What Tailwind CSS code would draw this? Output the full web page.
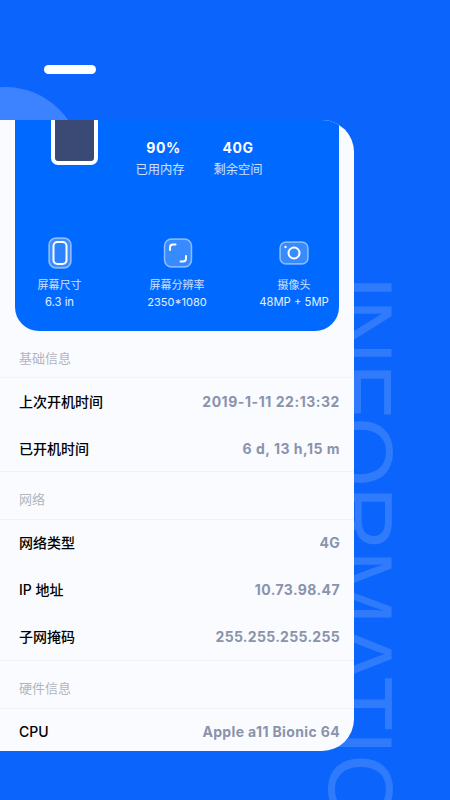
<!DOCTYPE html>
<html>
  <head>
    <meta charset="UTF-8" />
    <title>Information</title>
    <script src="https://cdn.jsdelivr.net/npm/@tailwindcss/browser@4"></script>
  </head>
  <body class="bg-[#0b64fb] font-['Inter','Noto_Sans_CJK_SC',sans-serif]">
    <div class="relative w-[450px] h-[800px] overflow-hidden">
      <!-- backdrop shapes -->
      <div class="absolute left-[-72px] top-[87px] w-[154px] h-[154px] rounded-full bg-[#3d82ff]"></div>
      <div class="absolute left-[394px] top-[275px] origin-top-left rotate-90 whitespace-nowrap font-['Liberation_Sans'] text-[90px] leading-[68px] tracking-[-1px] text-white/15">INFORMATION</div>

      <div class="relative pt-[65px]">
        <div class="ml-[44px] w-[52px] h-[9px] rounded-full bg-white"></div>

        <div class="mt-[46px] w-[354px] h-[631px] bg-[#f9fbff] rounded-tr-[32px] rounded-br-[32px] overflow-hidden">
          <div class="ml-[15px] w-[324px] h-[211px] bg-[#0069ff] rounded-b-[24px] overflow-hidden">
            <div class="flex h-[101px]">
              <div class="ml-[36px] w-[47px] h-[45px] border-x-4 border-b-4 border-white bg-[#3a4a75] rounded-b-[7px]"></div>
              <div class="ml-[37px] pt-[18px] w-[50px] flex flex-col items-center text-white whitespace-nowrap">
                <span class="pl-[7px] text-[14px] leading-[20px] font-bold tracking-[0.5px]">90%</span>
                <span class="text-[12.25px] leading-[18px] mt-[3px] text-white/80">已用内存</span>
              </div>
              <div class="ml-[28px] pt-[18px] w-[50px] flex flex-col items-center text-white whitespace-nowrap">
                <span class="text-[14px] leading-[20px] font-bold tracking-[0.5px]">40G</span>
                <span class="text-[12.25px] leading-[18px] mt-[3px] text-white/80">剩余空间</span>
              </div>
            </div>
            <div class="flex pt-[16px] text-center text-white whitespace-nowrap">
              <div class="w-[89px] flex flex-col items-center">
                <svg class="w-[30px] h-[32px]" viewBox="0 0 30 32" fill="none">
                  <rect x="4" y="1" width="22" height="30" rx="7" fill="#fff" fill-opacity=".25" stroke="#fff" stroke-opacity=".5" stroke-width="1.5"/>
                  <rect x="8.500" y="5" width="13" height="22" rx="4" fill="#0069ff" fill-opacity=".3" stroke="#fff" stroke-width="2"/>
                </svg>
                <span class="mt-[8px] text-[11px] leading-[16px] text-white/80">屏幕尺寸</span>
                <span class="mt-[1px] text-[11.25px] leading-[16px] text-white/90">6.3 in</span>
              </div>
              <div class="ml-[28px] w-[90px] flex flex-col items-center">
                <svg class="ml-[2px] w-[30px] h-[32px]" viewBox="0 0 30 32" fill="none">
                  <rect x="1.500" y="2" width="27" height="28" rx="7" fill="#fff" fill-opacity=".22" stroke="#fff" stroke-opacity=".5" stroke-width="1.5"/>
                  <path d="M7 13V10.500a3 3 0 0 1 3-3H12.500M23 19v2.500a3 3 0 0 1-3 3H17.500" stroke="#fff" stroke-width="2" stroke-linecap="round"/>
                </svg>
                <span class="mt-[8px] text-[11px] leading-[16px] text-white/80">屏幕分辨率</span>
                <span class="mt-[1px] text-[11px] leading-[16px] text-white/90">2350*1080</span>
              </div>
              <div class="ml-[27px] w-[90px] flex flex-col items-center">
                <svg class="w-[30px] h-[32px]" viewBox="0 0 30 32" fill="none">
                  <rect x="1" y="5" width="28" height="22" rx="6" fill="#fff" fill-opacity=".22" stroke="#fff" stroke-opacity=".5" stroke-width="1.5"/>
                  <circle cx="15" cy="16" r="5.500" stroke="#fff" stroke-width="2"/>
                  <circle cx="6.500" cy="10" r="1.200" fill="#fff"/>
                </svg>
                <span class="mt-[8px] text-[11px] leading-[16px] text-white/80">摄像头</span>
                <span class="mt-[1px] text-[11.25px] leading-[16px] text-white/90">48MP + 5MP</span>
              </div>
            </div>
          </div>

          <div class="h-[46px] px-[19px] pt-[19px] text-[13px] leading-[17px] text-[#b3b5bb]">基础信息</div>
          <div class="border-t border-[#f0f2f7]">
            <div class="h-[47px] pl-[19px] pr-[14px] flex items-center justify-between">
              <span class="text-[14px] font-medium text-black">上次开机时间</span>
              <span class="text-[14px] font-bold text-[#8a93ab] tracking-[0.55px]">2019-1-11 22:13:32</span>
            </div>
            <div class="h-[46px] pl-[19px] pr-[14px] flex items-center justify-between">
              <span class="text-[14px] font-medium text-black">已开机时间</span>
              <span class="text-[14px] font-bold text-[#8a93ab] tracking-[0.5px]">6 d, 13 h,15 m</span>
            </div>
          </div>

          <div class="h-[48px] border-t border-[#f0f2f7] px-[19px] pt-[19px] text-[13px] leading-[17px] text-[#b3b5bb]">网络</div>
          <div class="border-t border-[#f0f2f7]">
            <div class="h-[47px] pb-[2px] pl-[19px] pr-[14px] flex items-center justify-between">
              <span class="text-[14px] font-medium text-black">网络类型</span>
              <span class="text-[14px] font-bold text-[#8a93ab] tracking-[0.3px]">4G</span>
            </div>
            <div class="h-[47px] pb-[2px] pl-[19px] pr-[14px] flex items-center justify-between">
              <span class="text-[14px] font-medium text-black">IP 地址</span>
              <span class="text-[14px] font-bold text-[#8a93ab] tracking-[0.4px]">10.73.98.47</span>
            </div>
            <div class="h-[46px] pb-[2px] pl-[19px] pr-[14px] flex items-center justify-between">
              <span class="text-[14px] font-medium text-black">子网掩码</span>
              <span class="text-[14px] font-bold text-[#8a93ab] tracking-[0.3px]">255.255.255.255</span>
            </div>
          </div>

          <div class="h-[48px] border-t border-[#f0f2f7] px-[19px] pt-[19px] text-[13px] leading-[17px] text-[#b3b5bb]">硬件信息</div>
          <div class="border-t border-[#f0f2f7]">
            <div class="h-[47px] pb-[2px] pl-[19px] pr-[14px] flex items-center justify-between">
              <span class="text-[14px] font-medium text-black">CPU</span>
              <span class="text-[14px] font-bold text-[#8a93ab] tracking-[0.36px]">Apple a11 Bionic 64</span>
            </div>
          </div>
        </div>
      </div>
    </div>
  </body>
</html>
